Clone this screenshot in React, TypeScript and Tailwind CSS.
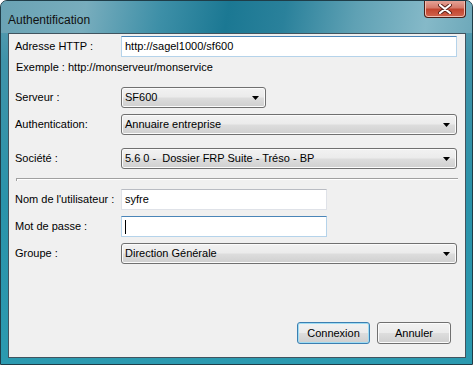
import type { ReactNode } from "react";

const COMBO_BG =
  "bg-[linear-gradient(to_bottom,#f2f2f2_0%,#ebebeb_48%,#dddddd_52%,#cfcfcf_100%)]";

function Arrow() {
  return (
    <svg width="7" height="4" viewBox="0 0 7 4" className="shrink-0">
      <polygon points="0,0 7,0 3.5,4" fill="#000" />
    </svg>
  );
}

function ComboBox({ value, width }: { value: string; width: string }) {
  return (
    <div
      className={`flex h-[21px] ${width} items-center justify-between rounded-[3px] border border-[#707070] ${COMBO_BG} pr-[6px] pl-[3px] shadow-[inset_0_0_0_1px_#fbfbfb]`}
    >
      <span className="whitespace-pre text-[11px] leading-[13px] text-black">
        {value}
      </span>
      <Arrow />
    </div>
  );
}

function TextBox({
  value,
  width,
  focused,
  caret,
}: {
  value?: string;
  width: string;
  focused?: boolean;
  caret?: boolean;
}) {
  return (
    <div
      className={`flex h-[21px] ${width} items-center border bg-white pl-[3px] ${
        focused
          ? "border-[#b5d3ea] border-t-[#4a85b8]"
          : "border-[#dfe2e8] border-t-[#b9bcc3]"
      }`}
    >
      {caret ? <span className="h-[14px] w-px bg-black" /> : null}
      {value ? (
        <span className="text-[11px] leading-[13px] text-black">{value}</span>
      ) : null}
    </div>
  );
}

function Row({
  label,
  className,
  children,
}: {
  label: string;
  className?: string;
  children: ReactNode;
}) {
  return (
    <div className={`flex items-center ${className ?? ""}`}>
      <span className="w-[106px] shrink-0 text-[11px] leading-[13px] text-black">
        {label}
      </span>
      {children}
    </div>
  );
}

function Button({ label, primary, width }: { label: string; primary?: boolean; width: string }) {
  return (
    <div
      className={`flex h-[22px] ${width} items-center justify-center rounded-[3px] border ${COMBO_BG} text-[11px] leading-[13px] text-black ${
        primary
          ? "border-[#3c7fb1] shadow-[inset_0_0_0_1px_#9fdcf3]"
          : "border-[#707070] shadow-[inset_0_0_0_1px_#fbfbfb]"
      }`}
    >
      {label}
    </div>
  );
}

export default function App() {
  return (
    <div className="relative flex h-[365px] w-[473px] flex-col overflow-hidden rounded-t-[7px] border border-[#1f3d48] bg-[linear-gradient(to_bottom,#5f9fb2_0px,#3f93a9_60px,#2a93aa_200px,#2b9ab0_365px)] font-['Liberation_Sans',Arial,sans-serif]">
      {/* title bar */}
      <div className="h-[32px] shrink-0 bg-[linear-gradient(100deg,#6aa3b4_0%,#78adbd_18%,#3d8fa7_34%,#1b7893_48%,#2a819b_60%,#5fa1b4_75%,#85b9c8_90%,#6ea9ba_100%)] pt-[6px] pl-[7px]">
        <span className="text-[12px] leading-[14px] text-[#111]">Authentification</span>
      </div>

      {/* close button */}
      <div className="absolute top-[-1px] right-[6px] flex h-[18px] w-[42px] items-center justify-center rounded-b-[4px] border border-t-0 border-[#4a1e16] bg-[linear-gradient(to_bottom,#e8a89c_0%,#d57b6b_45%,#c2452f_55%,#d0644d_100%)] shadow-[inset_0_0_0_1px_#f0bdb2]">
        <svg width="14" height="10" viewBox="0 0 14 10">
          <path d="M2 1 L12 9 M12 1 L2 9" stroke="#5a231b" strokeWidth="4" strokeLinecap="round" />
          <path d="M2 1 L12 9 M12 1 L2 9" stroke="#ffffff" strokeWidth="2.2" strokeLinecap="round" />
        </svg>
      </div>

      {/* client area */}
      <div className="mr-[6px] ml-[7px] flex h-[325px] w-[458px] flex-col border border-[#41545f] bg-[#f0f0f0] pl-[6px]">
        <Row label="Adresse HTTP :" className="mt-[2px]">
          <TextBox value="http://sagel1000/sf600" width="w-[336px]" focused />
        </Row>
        <div className="mt-[4px] pl-px text-[11px] leading-[13px] text-black">
          Exemple : http://monserveur/monservice
        </div>
        <Row label="Serveur :" className="mt-[13px]">
          <ComboBox value="SF600" width="w-[145px]" />
        </Row>
        <Row label="Authentication:" className="mt-[6px]">
          <ComboBox value="Annuaire entreprise" width="w-[336px]" />
        </Row>
        <Row label="Société :" className="mt-[13px]">
          <ComboBox value="5.6 0 -  Dossier FRP Suite - Tréso - BP" width="w-[336px]" />
        </Row>

        {/* etched separator */}
        <div className="mt-[9px] ml-px h-[3px] w-[442px] border-t border-l border-[#a0a0a0] shadow-[inset_1px_1px_0_#ffffff]" />

        <Row label="Nom de l'utilisateur :" className="mt-[8px]">
          <TextBox value="syfre" width="w-[206px]" />
        </Row>
        <Row label="Mot de passe :" className="mt-[6px]">
          <TextBox width="w-[206px]" focused caret />
        </Row>
        <Row label="Groupe :" className="mt-[6px]">
          <ComboBox value="Direction Générale" width="w-[336px]" />
        </Row>

        <div className="mt-[58px] flex justify-end gap-[7px] pr-[14px]">
          <Button label="Connexion" width="w-[73px]" primary />
          <Button label="Annuler" width="w-[74px]" />
        </div>
      </div>
    </div>
  );
}
